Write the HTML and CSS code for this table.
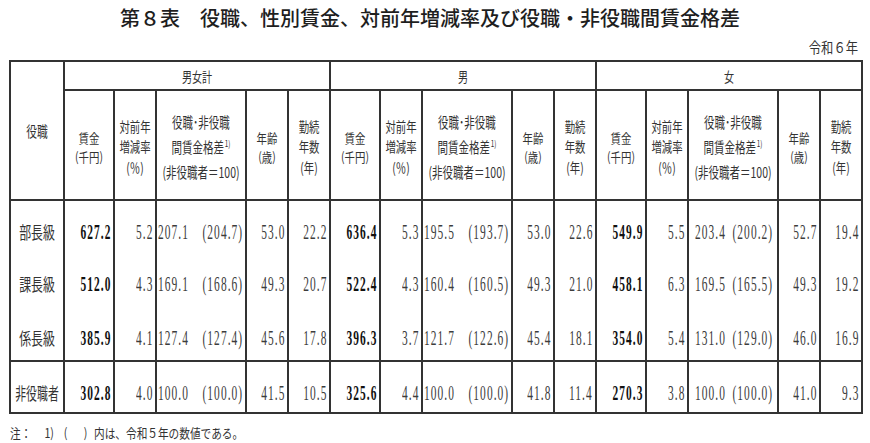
FILE: index.html
```html
<!DOCTYPE html>
<html lang="ja">
<head>
<meta charset="utf-8">
<title>第８表</title>
<link rel="stylesheet" href="styles.css">
</head>
<body>
<h1 class="title">第８表　役職、性別賃金、対前年増減率及び役職・非役職間賃金格差</h1>
<div class="year"><span class="yr">令和６年</span></div>
<table class="tbl">
  <colgroup>
    <col class="c-lab">
    <col class="c-wage"><col class="c-rate"><col class="c-gap"><col class="c-age"><col class="c-yrs">
    <col class="c-wage"><col class="c-rate"><col class="c-gap"><col class="c-age"><col class="c-yrs">
    <col class="c-wage"><col class="c-rate"><col class="c-gap"><col class="c-age"><col class="c-yrs">
  </colgroup>
  <thead>
    <tr class="h1r">
      <th rowspan="2" class="hl"><div class="stk sl"><span>役職</span></div></th>
      <th colspan="5"><div class="stk s1"><span>男女計</span></div></th>
      <th colspan="5"><div class="stk s1"><span>男</span></div></th>
      <th colspan="5"><div class="stk s1"><span>女</span></div></th>
    </tr>
    <tr class="h2r">
      <th><div class="stk s2"><span>賃金</span><span>(千円)</span></div></th>
      <th><div class="stk s3"><span>対前年</span><span>増減率</span><span>(％)</span></div></th>
      <th><div class="stk sg"><span>役職･非役職</span><span>間賃金格差<sup class="sup">1)</sup></span><span>(非役職者＝100)</span></div></th>
      <th><div class="stk s2"><span>年齢</span><span>(歳)</span></div></th>
      <th><div class="stk s3"><span>勤続</span><span>年数</span><span>(年)</span></div></th>
      <th><div class="stk s2"><span>賃金</span><span>(千円)</span></div></th>
      <th><div class="stk s3"><span>対前年</span><span>増減率</span><span>(％)</span></div></th>
      <th><div class="stk sg"><span>役職･非役職</span><span>間賃金格差<sup class="sup">1)</sup></span><span>(非役職者＝100)</span></div></th>
      <th><div class="stk s2"><span>年齢</span><span>(歳)</span></div></th>
      <th><div class="stk s3"><span>勤続</span><span>年数</span><span>(年)</span></div></th>
      <th><div class="stk s2"><span>賃金</span><span>(千円)</span></div></th>
      <th><div class="stk s3"><span>対前年</span><span>増減率</span><span>(％)</span></div></th>
      <th><div class="stk sg"><span>役職･非役職</span><span>間賃金格差<sup class="sup">1)</sup></span><span>(非役職者＝100)</span></div></th>
      <th><div class="stk s2"><span>年齢</span><span>(歳)</span></div></th>
      <th><div class="stk s3"><span>勤続</span><span>年数</span><span>(年)</span></div></th>
    </tr>
  </thead>
  <tbody>
    <tr class="r1">
      <td><div class="stk lab"><span>部長級</span></div></td>
      <td><div class="r"><span class="n b">627.2</span></div></td>
      <td><div class="r"><span class="n">5.2</span></div></td>
      <td><div class="gap"><div class="gl"><span class="n nl">207.1</span></div><div class="gr"><span class="n">(204.7)</span></div></div></td>
      <td><div class="r"><span class="n">53.0</span></div></td>
      <td><div class="r"><span class="n">22.2</span></div></td>
      <td><div class="r"><span class="n b">636.4</span></div></td>
      <td><div class="r"><span class="n">5.3</span></div></td>
      <td><div class="gap"><div class="gl"><span class="n nl">195.5</span></div><div class="gr"><span class="n">(193.7)</span></div></div></td>
      <td><div class="r"><span class="n">53.0</span></div></td>
      <td><div class="r"><span class="n">22.6</span></div></td>
      <td><div class="r"><span class="n b">549.9</span></div></td>
      <td><div class="r"><span class="n">5.5</span></div></td>
      <td><div class="gap gw"><div class="gl"><span class="n nl">203.4</span></div><div class="gr"><span class="n">(200.2)</span></div></div></td>
      <td><div class="r"><span class="n">52.7</span></div></td>
      <td><div class="r"><span class="n">19.4</span></div></td>
    </tr>
    <tr class="r2">
      <td><div class="stk lab"><span>課長級</span></div></td>
      <td><div class="r"><span class="n b">512.0</span></div></td>
      <td><div class="r"><span class="n">4.3</span></div></td>
      <td><div class="gap"><div class="gl"><span class="n nl">169.1</span></div><div class="gr"><span class="n">(168.6)</span></div></div></td>
      <td><div class="r"><span class="n">49.3</span></div></td>
      <td><div class="r"><span class="n">20.7</span></div></td>
      <td><div class="r"><span class="n b">522.4</span></div></td>
      <td><div class="r"><span class="n">4.3</span></div></td>
      <td><div class="gap"><div class="gl"><span class="n nl">160.4</span></div><div class="gr"><span class="n">(160.5)</span></div></div></td>
      <td><div class="r"><span class="n">49.3</span></div></td>
      <td><div class="r"><span class="n">21.0</span></div></td>
      <td><div class="r"><span class="n b">458.1</span></div></td>
      <td><div class="r"><span class="n">6.3</span></div></td>
      <td><div class="gap gw"><div class="gl"><span class="n nl">169.5</span></div><div class="gr"><span class="n">(165.5)</span></div></div></td>
      <td><div class="r"><span class="n">49.3</span></div></td>
      <td><div class="r"><span class="n">19.2</span></div></td>
    </tr>
    <tr class="r3">
      <td><div class="stk lab"><span>係長級</span></div></td>
      <td><div class="r"><span class="n b">385.9</span></div></td>
      <td><div class="r"><span class="n">4.1</span></div></td>
      <td><div class="gap"><div class="gl"><span class="n nl">127.4</span></div><div class="gr"><span class="n">(127.4)</span></div></div></td>
      <td><div class="r"><span class="n">45.6</span></div></td>
      <td><div class="r"><span class="n">17.8</span></div></td>
      <td><div class="r"><span class="n b">396.3</span></div></td>
      <td><div class="r"><span class="n">3.7</span></div></td>
      <td><div class="gap"><div class="gl"><span class="n nl">121.7</span></div><div class="gr"><span class="n">(122.6)</span></div></div></td>
      <td><div class="r"><span class="n">45.4</span></div></td>
      <td><div class="r"><span class="n">18.1</span></div></td>
      <td><div class="r"><span class="n b">354.0</span></div></td>
      <td><div class="r"><span class="n">5.4</span></div></td>
      <td><div class="gap gw"><div class="gl"><span class="n nl">131.0</span></div><div class="gr"><span class="n">(129.0)</span></div></div></td>
      <td><div class="r"><span class="n">46.0</span></div></td>
      <td><div class="r"><span class="n">16.9</span></div></td>
    </tr>
    <tr class="r4">
      <td><div class="stk lab lab4"><span>非役職者</span></div></td>
      <td><div class="r"><span class="n b">302.8</span></div></td>
      <td><div class="r"><span class="n">4.0</span></div></td>
      <td><div class="gap"><div class="gl"><span class="n nl">100.0</span></div><div class="gr"><span class="n">(100.0)</span></div></div></td>
      <td><div class="r"><span class="n">41.5</span></div></td>
      <td><div class="r"><span class="n">10.5</span></div></td>
      <td><div class="r"><span class="n b">325.6</span></div></td>
      <td><div class="r"><span class="n">4.4</span></div></td>
      <td><div class="gap"><div class="gl"><span class="n nl">100.0</span></div><div class="gr"><span class="n">(100.0)</span></div></div></td>
      <td><div class="r"><span class="n">41.8</span></div></td>
      <td><div class="r"><span class="n">11.4</span></div></td>
      <td><div class="r"><span class="n b">270.3</span></div></td>
      <td><div class="r"><span class="n">3.8</span></div></td>
      <td><div class="gap gw"><div class="gl"><span class="n nl">100.0</span></div><div class="gr"><span class="n">(100.0)</span></div></div></td>
      <td><div class="r"><span class="n">41.0</span></div></td>
      <td><div class="r"><span class="n">9.3</span></div></td>
    </tr>
  </tbody>
</table>
<p class="note"><span class="nt">注：<span class="g1">1)</span><span class="g2">(</span><span class="g3">)</span><span class="g4">内は、令和５年の数値である。</span></span></p>
</body>
</html>
```
FILE: styles.css
```css
html, body {
  margin: 0;
  padding: 0;
  background: #fff;
}
body {
  width: 870px;
  height: 443px;
  overflow: hidden;
  font-family: "Noto Sans CJK JP", "Liberation Sans", sans-serif;
  color: #333;
}
.title {
  margin: 0;
  padding: 5px 10px 0 0;
  font-size: 20px;
  line-height: 26px;
  font-weight: 500;
  text-align: center;
  color: #1e1e1e;
  white-space: nowrap;
}
.year {
  margin-top: 6px;
  height: 20px;
  padding-right: 12px;
  display: flex;
  justify-content: flex-end;
}
.yr {
  flex: none;
  font-size: 15px;
  line-height: 20px;
  transform: scaleX(.82);
  transform-origin: right center;
  white-space: nowrap;
}
.tbl {
  border-collapse: collapse;
  table-layout: fixed;
  width: 852px;
  margin: 3px 0 0 9px;
}
.c-lab { width: 54px; }
.c-wage { width: 50px; }
.c-rate { width: 42px; }
.c-gap { width: 90px; }
.c-age { width: 42px; }
.c-yrs { width: 42px; }

.tbl th, .tbl td {
  border: 2px solid #333;
  padding: 0;
  font-weight: normal;
  overflow: visible;
}
.h1r { height: 29px; }
.h2r { height: 110px; }
.h2r th { padding-top: 3px; }
.r1 { height: 50px; }
.r2 { height: 50px; }
.r3 { height: 61px; }
.r4 { height: 52px; }
.r1 td, .r2 td, .r3 td { vertical-align: top; }
.r1 td { border-bottom: none; padding-top: 20px; }
.r2 td { border-top: none; border-bottom: none; padding-top: 23px; }
.r3 td { border-top: none; padding-top: 27px; }
.r4 td { vertical-align: middle; padding-top: 12px; }

.stk {
  display: flex;
  flex-direction: column;
  align-items: center;
  white-space: nowrap;
  transform: scaleX(.7);
  font-size: 15px;
  color: #333;
}
.sl { font-size: 15px; transform: scaleX(.72); }
.s1 { font-size: 14px; line-height: 20px; transform: scaleX(.72); }
.s2 { font-size: 13px; line-height: 19px; transform: scaleX(.8); }
.s3 { font-size: 14px; line-height: 20.5px; transform: scaleX(.74); }
.sg { line-height: 25px; }
.sup {
  font-size: 9px;
  line-height: 0;
  vertical-align: 6px;
  margin-left: 1px;
}
.lab {
  font-size: 17px;
  line-height: 22px;
  transform: scaleX(.7);
}
.lab4 { transform: scaleX(.64); }

.r {
  display: flex;
  justify-content: flex-end;
  padding-right: 2px;
}
.gap {
  display: flex;
  padding: 0 2px 0 1px;
}
.gw { padding: 0 4px 0 6px; }
.gl, .gr {
  flex: 1 1 0;
  min-width: 0;
  display: flex;
}
.gr { justify-content: flex-end; }

.n {
  display: inline-block;
  flex: none;
  font-family: "Liberation Serif", serif;
  font-size: 22px;
  line-height: 22px;
  letter-spacing: 2px;
  transform: scaleX(.52);
  transform-origin: right center;
  color: #3c3c3c;
  white-space: nowrap;
}
.nl { transform-origin: left center; }
.b { font-weight: 700; color: #111; }

.note {
  margin: 12px 0 0 10px;
  height: 14px;
  display: flex;
}
.nt {
  flex: none;
  font-size: 13px;
  line-height: 14px;
  transform: scaleX(.82);
  transform-origin: left center;
  white-space: nowrap;
  color: #333;
}
.g1 { margin-left: 16px; }
.g2 { margin-left: 12px; }
.g3 { margin-left: 20px; }
.g4 { margin-left: 8px; }
```
